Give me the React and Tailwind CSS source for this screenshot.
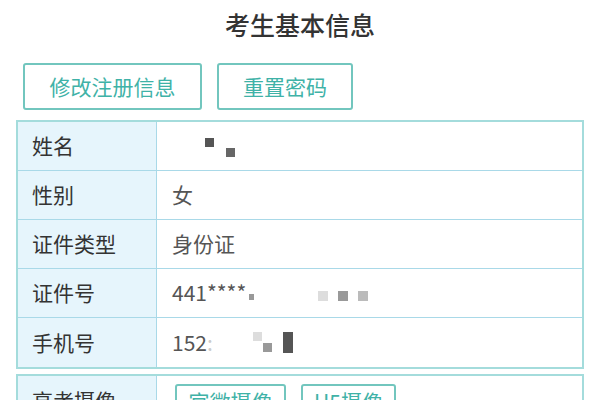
const rows = [
  { label: '姓名', kind: 'name' },
  { label: '性别', value: '女' },
  { label: '证件类型', value: '身份证' },
  { label: '证件号', kind: 'id' },
  { label: '手机号', kind: 'phone' },
];

function Blot({ className }) {
  return <span className={`inline-block ${className}`} />;
}

function RowValue({ row }) {
  if (row.kind === 'name') {
    return (
      <div className="flex items-start pl-[33px] pt-[2px]">
        <Blot className="w-[9px] h-[9px] bg-[#555]" />
        <Blot className="w-[9px] h-[9px] bg-[#666] ml-[12px] mt-[10px]" />
      </div>
    );
  }
  if (row.kind === 'id') {
    return (
      <div className="flex items-center">
        <span>441****</span>
        <Blot className="w-[5px] h-[6px] bg-[#999] mt-[8px] ml-[3px]" />
        <Blot className="w-[10px] h-[10px] bg-[#ddd] ml-[64px] mt-[6px]" />
        <Blot className="w-[10px] h-[10px] bg-[#999] ml-[10px] mt-[6px]" />
        <Blot className="w-[10px] h-[10px] bg-[#bbb] ml-[10px] mt-[6px]" />
      </div>
    );
  }
  if (row.kind === 'phone') {
    return (
      <div className="flex items-center">
        <span>152</span>
        <span className="text-[#ccc]">:</span>
        <div className="relative ml-[40px] w-[40px] h-[22px]">
          <Blot className="absolute left-0 top-0 w-[9px] h-[9px] bg-[#ddd]" />
          <Blot className="absolute left-[10px] top-[11px] w-[9px] h-[9px] bg-[#999]" />
          <Blot className="absolute left-[30px] top-0 w-[10px] h-[21px] bg-[#555]" />
        </div>
      </div>
    );
  }
  return <span>{row.value}</span>;
}

export default function App() {
  return (
    <div
      className="w-[600px] h-[400px] overflow-hidden bg-white"
      style={{ fontFamily: '"Noto Sans CJK SC", "Noto Sans", sans-serif' }}
    >
      <h1 className="h-[50px] flex items-center justify-center text-[25px] font-medium text-[#333]">
        考生基本信息
      </h1>

      <div className="flex gap-[15px] pl-[23px] pt-[13px]">
        <button className="w-[179px] h-[47px] border-2 border-[#72c6be] rounded-[3px] text-[21px] text-[#3fb2a7]">
          修改注册信息
        </button>
        <button className="w-[136px] h-[47px] border-2 border-[#72c6be] rounded-[3px] text-[21px] text-[#3fb2a7]">
          重置密码
        </button>
      </div>

      <div className="mx-[16px] mt-[10px] border-2 border-[#a4dcdc] text-[21px]">
        {rows.map((row, i) => (
          <div
            key={row.label}
            className={`flex h-[49px] ${i < rows.length - 1 ? 'border-b border-[#a9d9e8]' : ''}`}
          >
            <div className="w-[139px] shrink-0 flex items-center pl-[14px] bg-[#e6f5fc] border-r border-[#a9d9e8] text-[#333]">
              {row.label}
            </div>
            <div className="flex-1 flex items-center pl-[15px] text-[#555]">
              <RowValue row={row} />
            </div>
          </div>
        ))}
      </div>

      <div className="mx-[16px] mt-[5px] border-2 border-[#a4dcdc] text-[21px]">
        <div className="flex h-[60px]">
          <div className="w-[139px] shrink-0 flex items-start pt-[9px] pl-[14px] bg-[#e6f5fc] border-r border-[#a9d9e8] text-[#333]">
            高考摄像
          </div>
          <div className="flex-1 flex items-start gap-[15px] pl-[18px] pt-[8px]">
            <button className="w-[111px] h-[36px] border-2 border-[#72c6be] rounded-[3px] text-[21px] text-[#3fb2a7]">
              官微摄像
            </button>
            <button className="w-[95px] h-[36px] border-2 border-[#72c6be] rounded-[3px] text-[21px] text-[#3fb2a7]">
              H5摄像
            </button>
          </div>
        </div>
      </div>
    </div>
  );
}
